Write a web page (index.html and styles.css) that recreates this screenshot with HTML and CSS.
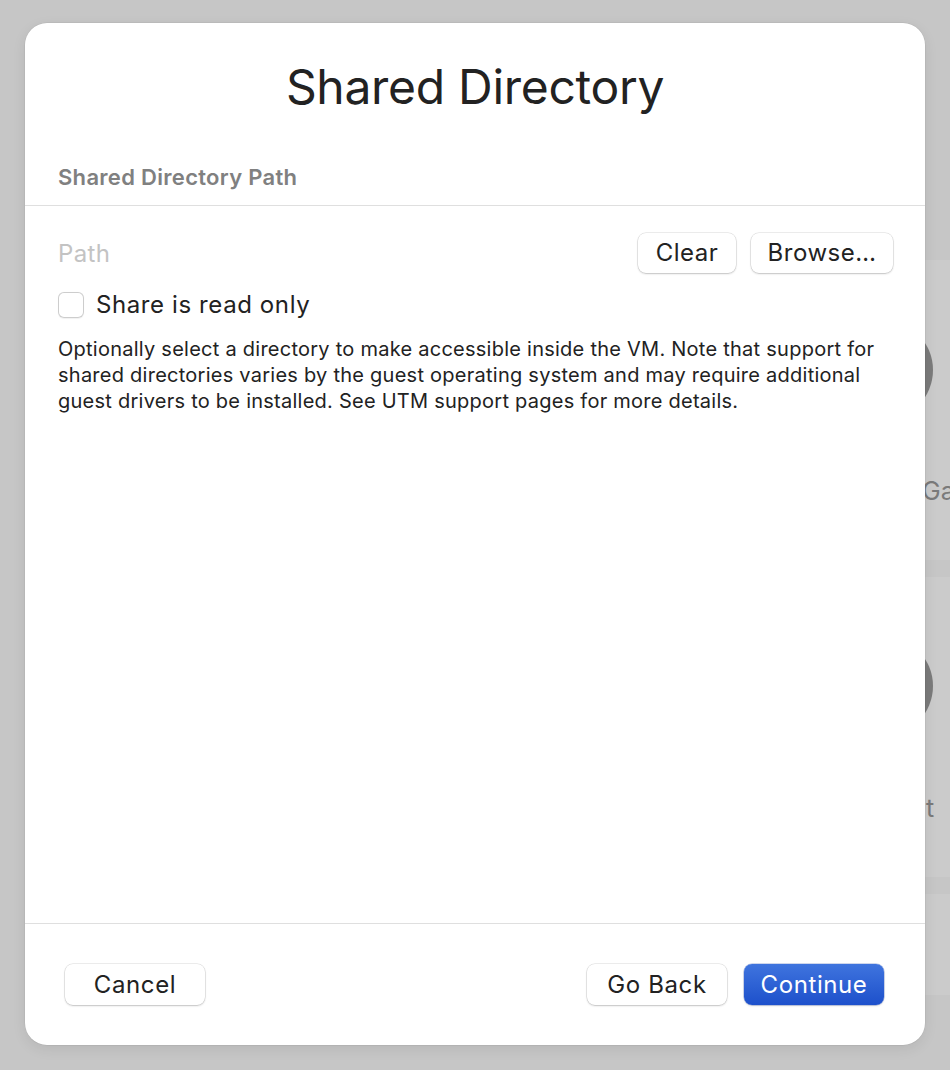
FILE: index.html
```html
<!DOCTYPE html>
<html lang="en">
<head>
<meta charset="utf-8">
<title>Shared Directory</title>
<link rel="stylesheet" href="styles.css">
</head>
<body>
<div class="backdrop">
  <div class="bg-top"></div>
  <div class="bg-card">
    <div class="bg-circle"></div>
    <div class="bg-label">Ga</div>
  </div>
  <div class="bg-card">
    <div class="bg-circle bg-circle-2"></div>
    <div class="bg-label bg-label-2">t</div>
  </div>
  <div class="bg-card bg-card-short"></div>
</div>

<div class="dialog">
  <header class="dialog-head">
    <h1 class="title">Shared Directory</h1>
    <div class="section-title">Shared Directory Path</div>
  </header>
  <main class="dialog-body">
    <div class="path-row">
      <span class="path-placeholder">Path</span>
      <div class="path-actions">
        <button class="btn btn-clear">Clear</button>
        <button class="btn btn-browse">Browse…</button>
      </div>
    </div>
    <label class="check-row">
      <span class="checkbox"></span>
      <span class="check-label">Share is read only</span>
    </label>
    <p class="description">Optionally select a directory to make accessible inside the VM. Note that support for shared directories varies by the guest operating system and may require additional guest drivers to be installed. See UTM support pages for more details.</p>
  </main>
  <footer class="dialog-foot">
    <button class="btn btn-foot">Cancel</button>
    <div class="foot-right">
      <button class="btn btn-foot">Go Back</button>
      <button class="btn btn-foot btn-primary">Continue</button>
    </div>
  </footer>
</div>
</body>
</html>
```

FILE: styles.css
```css
* { box-sizing: border-box; }

html, body {
  margin: 0;
  padding: 0;
}

body {
  width: 950px;
  height: 1070px;
  overflow: hidden;
  background: #c6c6c6;
  font-family: "Inter", "Liberation Sans", sans-serif;
  color: #222222;
  position: relative;
}

/* ---------- backdrop (window behind the sheet) ---------- */
.backdrop {
  display: flex;
  flex-direction: column;
  align-items: flex-end;
  height: 1070px;
}

.bg-top {
  height: 260px;
  flex: none;
}

.bg-card {
  width: 130px;
  height: 300px;
  margin-bottom: 17px;
  background: #cbcbcb;
  display: flex;
  flex-direction: column;
  overflow: hidden;
  flex: none;
}

.bg-card-short {
  height: 101px;
}

.bg-circle {
  width: 100px;
  height: 100px;
  border-radius: 50%;
  background: #7b7b7b;
  margin: 60px 0 0 13px;
  flex: none;
}

.bg-circle-2 {
  margin-top: 59px;
}

.bg-label {
  margin: 56px 0 0 102px;
  font-size: 25px;
  line-height: 30px;
  color: #7a7a7a;
  white-space: nowrap;
}

.bg-label-2 {
  margin: 57px 0 0 106px;
}

/* ---------- dialog ---------- */
.dialog {
  position: absolute;
  left: 25px;
  top: 23px;
  width: 900px;
  height: 1022px;
  background: #ffffff;
  border-radius: 22px;
  box-shadow: 0 0 0 0.5px rgba(0,0,0,0.08), 0 4px 14px rgba(0,0,0,0.08);
  display: flex;
  flex-direction: column;
  overflow: hidden;
}

.dialog-head {
  padding: 34px 33px 0;
  border-bottom: 1px solid #dfdfdf;
}

.title {
  margin: 0;
  font-size: 48px;
  font-weight: 400;
  line-height: 60px;
  text-align: center;
  color: #222222;
  letter-spacing: -0.3px;
}

.section-title {
  margin-top: 46px;
  margin-bottom: 14px;
  font-size: 22px;
  line-height: 28px;
  font-weight: 600;
  color: #808080;
  letter-spacing: 0.3px;
}

.dialog-body {
  flex: 1;
  padding: 27px 32px 0 33px;
}

.path-row {
  display: flex;
  align-items: center;
  justify-content: space-between;
}

.path-placeholder {
  font-size: 24px;
  color: #c3c3c3;
  letter-spacing: 0.4px;
}

.path-actions {
  display: flex;
  gap: 15px;
}

.btn {
  font-family: inherit;
  font-size: 24px;
  letter-spacing: 0.5px;
  color: #222222;
  background: #ffffff;
  border: none;
  border-radius: 8px;
  box-shadow: 0 0 0 0.5px rgba(0,0,0,0.14), 0 1px 2px rgba(0,0,0,0.18);
  height: 40px;
  padding: 0;
  line-height: 40px;
  text-align: center;
  cursor: default;
}

.btn-clear { width: 98px; }
.btn-browse { width: 142px; }

.check-row {
  display: flex;
  align-items: center;
  gap: 12px;
  margin-top: 18px;
}

.checkbox {
  width: 26px;
  height: 26px;
  border-radius: 6px;
  background: #ffffff;
  box-shadow: inset 0 0 0 1px #cdcdcd, 0 0.5px 1px rgba(0,0,0,0.06);
  flex: none;
}

.check-label {
  font-size: 24px;
  line-height: 28px;
  letter-spacing: 0.6px;
  color: #222222;
}

.description {
  margin: 17px 0 0;
  font-size: 20px;
  line-height: 26px;
  letter-spacing: 0.25px;
  color: #222222;
}

.dialog-foot {
  border-top: 1px solid #dfdfdf;
  height: 122px;
  flex: none;
  display: flex;
  align-items: center;
  justify-content: space-between;
  padding: 0 41px 0 40px;
}

.foot-right {
  display: flex;
  gap: 17px;
}

.btn-foot {
  width: 140px;
  height: 41px;
  line-height: 41px;
  letter-spacing: 0.6px;
}

.btn-primary {
  color: #ffffff;
  background: linear-gradient(#3f74de, #1d50cb);
  box-shadow: 0 0 0 0.5px rgba(20,60,170,0.4), 0 1px 2px rgba(0,0,0,0.15);
}
```
